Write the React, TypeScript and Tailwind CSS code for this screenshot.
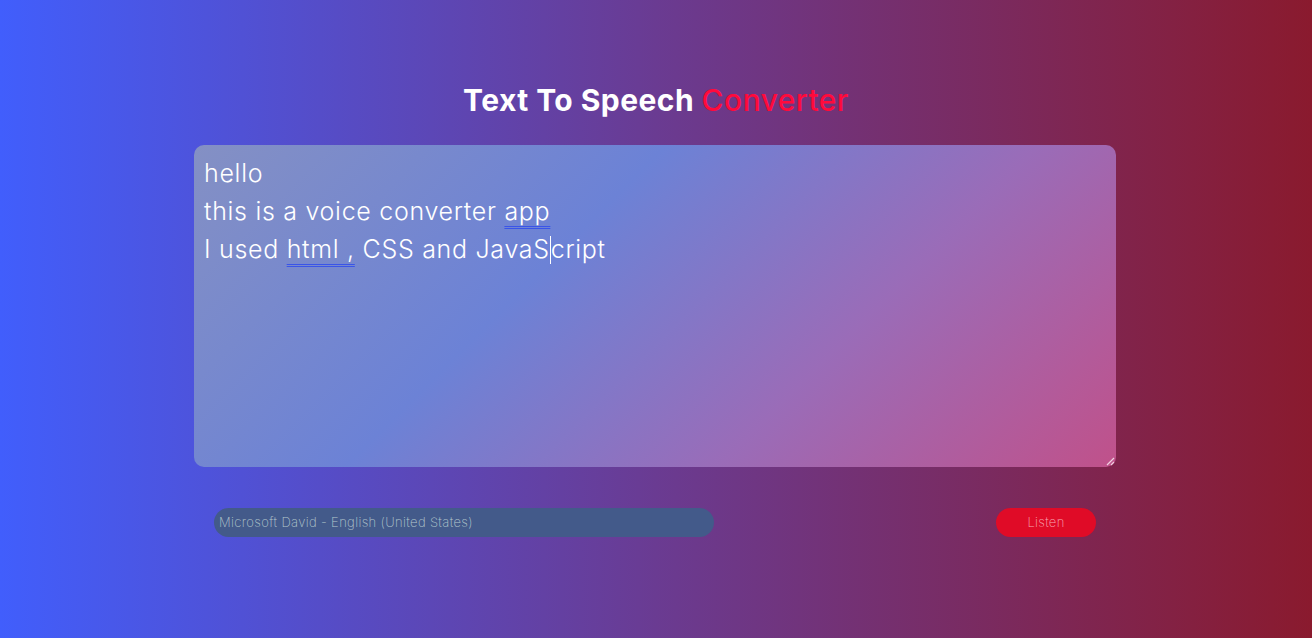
import React from "react";

const App = () => {
  return (
    <div className="w-full h-[638px] flex flex-col items-center bg-[linear-gradient(to_right,#415efc,#6a3b92_50%,#8a1a2e)] font-['Inter',sans-serif] text-white">
      {/* heading */}
      <h1 className="mt-[78px] text-[30px] leading-[45px] font-bold tracking-[0.45px]">
        Text To Speech <span className="text-[#ff0a3c] font-medium">Converter</span>
      </h1>

      {/* text area */}
      <div className="relative mt-[22px] mr-[2px] w-[922px] h-[322px] rounded-[10px] bg-[linear-gradient(135deg,#8490c4_0%,#6c82d6_38%,#9a6cb8_68%,#c0518a_100%)] px-[10px] py-[9px] text-[25px] leading-[38px] font-light tracking-[0.7px]">
        <p>hello</p>
        <p>
          this is a voice converter{" "}
          <span className="underline decoration-double decoration-[#3a55e8] decoration-1 underline-offset-[6px]">app</span>
        </p>
        <p>
          I used{" "}
          <span className="underline decoration-double decoration-[#3a55e8] decoration-1 underline-offset-[6px]">html ,</span>{" "}
          CSS and JavaS
          <span className="inline-block w-px h-[28px] bg-white align-[-6px]"></span>
          cript
        </p>
        {/* resize grip */}
        <svg className="absolute right-[1px] bottom-[1px]" width="9" height="9" viewBox="0 0 9 9">
          <path d="M8 1 L1 8 M8 5 L5 8" stroke="#f0d0e0" strokeWidth="1.2" />
        </svg>
      </div>

      {/* controls */}
      <div className="mt-[41px] mr-[2px] w-[922px] px-5 flex items-center justify-between">
        <div className="w-[500px] h-[29px] rounded-full bg-[#435a8a] flex items-center px-[5px] text-[13px] font-extralight tracking-[0.35px] text-[#b4c8cc]">
          Microsoft David - English (United States)
        </div>
        <button className="w-[100px] h-[29px] rounded-full bg-[#e00b27] text-[13px] font-extralight tracking-[0.3px] text-[#f7a6b4]">
          Listen
        </button>
      </div>
    </div>
  );
};

export default App;
